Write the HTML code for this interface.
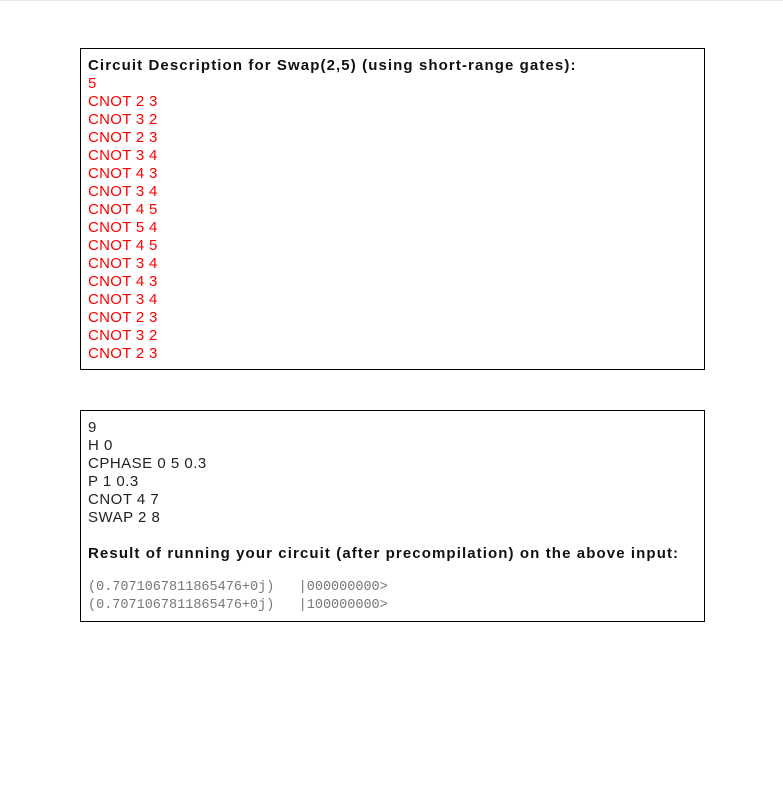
<!DOCTYPE html>
<html><head><style>
body{margin:0;background:#fff;font-family:"Liberation Sans",sans-serif;font-size:15px;color:#222;}
.box{position:absolute;left:80px;width:608px;border:1px solid #000;padding:8px 8px 7px 7px;line-height:18px;letter-spacing:0.5px;}
.r{color:#f00;letter-spacing:0.3px;}
b{font-weight:bold;color:#111;letter-spacing:1.1px;}
pre{font-family:"Liberation Mono",monospace;font-size:13.5px;color:#777;margin:0;line-height:18px;letter-spacing:0;}
</style></head><body>
<div style="position:absolute;left:0;top:0;width:783px;height:1px;background:#e8e8e8"></div>
<div class="box" style="top:48px;height:305px;">
<b>Circuit Description for Swap(2,5) (using short-range gates):</b><br>
<span class="r">5<br>CNOT 2 3<br>CNOT 3 2<br>CNOT 2 3<br>CNOT 3 4<br>CNOT 4 3<br>CNOT 3 4<br>CNOT 4 5<br>CNOT 5 4<br>CNOT 4 5<br>CNOT 3 4<br>CNOT 4 3<br>CNOT 3 4<br>CNOT 2 3<br>CNOT 3 2<br>CNOT 2 3</span>
</div>
<div class="box" style="top:410px;height:195px;">
9<br>H 0<br>CPHASE 0 5 0.3<br>P 1 0.3<br>CNOT 4 7<br>SWAP 2 8<br><br>
<b>Result of running your circuit (after precompilation) on the above input:</b><br>
<div style="height:16px"></div>
<pre>(0.7071067811865476+0j)   |000000000&gt;
(0.7071067811865476+0j)   |100000000&gt;</pre>
</div>
</body></html>
